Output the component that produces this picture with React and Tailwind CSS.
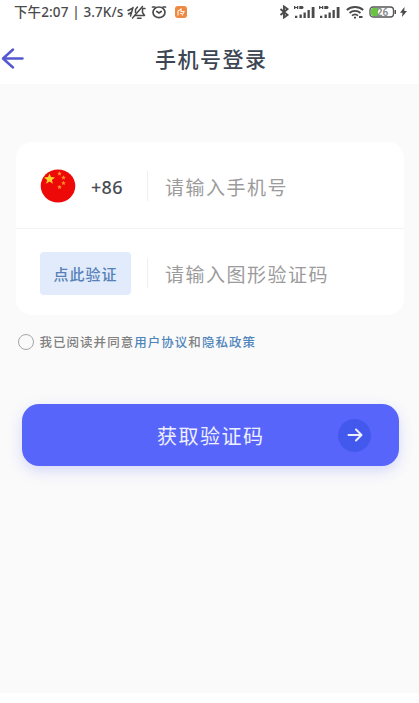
import React from 'react';

const LINKS = ['用户协议', '隐私政策'];

const SMALL_STARS = [
  { x: 19.5, y: 4.5 },
  { x: 23.5, y: 8.5 },
  { x: 23.5, y: 14 },
  { x: 19.5, y: 18 },
];

function MuteIcon() {
  return (
    <svg width="20" height="16" viewBox="0 0 20 16" fill="none" stroke="#4a4a4a" strokeWidth="1.500" strokeLinecap="round" strokeLinejoin="round">
      <path d="M1 6.500 5 4.500M1.500 10l3-1.800M6 3.500 3.500 12" />
      <path d="M8 11.500h9.500L15.500 8.500V4.500h2.500M8.500 8.500V5.500l2-2.500" />
      <path d="M15.500 2.500 5.500 14M10.500 14.300h3.500" />
    </svg>
  );
}

function AlarmIcon() {
  return (
    <svg width="16" height="16" viewBox="0 0 16 16" fill="none" stroke="#4a4a4a" strokeWidth="1.700" strokeLinecap="round">
      <ellipse cx="8" cy="8.300" rx="6" ry="5.300" />
      <path d="M1.500 3H4M14.500 3H12M5.800 7.500 8 9l2.200-1.500" />
    </svg>
  );
}

function AppBadge() {
  return (
    <svg width="12" height="12" viewBox="0 0 12 12" fill="none">
      <rect width="12" height="12" rx="3" fill="#ee8944" />
      <path d="M3 9.500V5l3-2v2.500h3L7 9.500M5 7.500h2" stroke="#fff1e4" strokeWidth="1.200" />
    </svg>
  );
}

function BluetoothIcon() {
  return (
    <svg width="11" height="14" viewBox="0 0 11 14" fill="none" stroke="#4a4a4a" strokeWidth="1.900">
      <path d="m1.500 4 7 6L5 12.500v-11L8.500 4l-7 6" />
    </svg>
  );
}

function SignalIcon() {
  return (
    <svg width="22" height="14" viewBox="0 0 22 14" fill="#4a4a4a">
      <path d="M0 1h1.300v1H3V1h1.300v3H3V3H1.300v1H0zM5.300 1H8.500L9.500 2v1L8.500 4H5.300z" />
      <path d="M1 10.800h2.300V13H1zM5.500 9.500h2.300V13H5.500zM9.500 7.500h2.300V13H9.500zM13.500 5h2.300v8h-2.300zM17.700 2h2.800v11h-2.800z" />
    </svg>
  );
}

function WifiIcon() {
  return (
    <svg width="18" height="14" viewBox="0 0 18 14" fill="none" stroke="#4a4a4a" strokeWidth="1.800">
      <path d="M.8 5c4.500-4 11.900-4 16.400 0M3.500 8c3.200-2.800 7.800-2.800 11 0M6 10.700c1.700-1.500 4.300-1.500 6 0" />
      <path d="M8 12.700h2M13 12h3.500" />
    </svg>
  );
}

function BatteryIcon() {
  return (
    <svg width="28" height="14" viewBox="0 0 28 14">
      <rect x="1" y="2" width="23.500" height="10" rx="3" fill="#fff" stroke="#555" strokeWidth="1.300" />
      <path d="M4 3h5v8H4c-1.300 0-2-.8-2-2V5c0-1.200.7-2 2-2z" fill="#69c53f" />
      <path d="M25.500 5h1.500v4h-1.500z" fill="#555" />
      <text x="13.500" y="10.500" textAnchor="middle" fontSize="10" fontWeight="600" fill="#888" fontFamily="Roboto, sans-serif">26</text>
    </svg>
  );
}

function Flag() {
  return (
    <svg width="36" height="34" viewBox="0 0 36 34">
      <ellipse cx="18" cy="17" rx="17.300" ry="16.500" fill="#ed0908" />
      <path
        d="m9.500 4.500 1.500 3.600 4 .3-3.100 2.500 1 3.800-3.400-2.100-3.400 2.100 1-3.800L4 8.400l4-.3z"
        fill="#ffd32b"
      />
      {SMALL_STARS.map(({ x, y }) => (
        <path key={`${x}-${y}`} transform={`translate(${x} ${y})`} d="m0-2.300.7 1.500 1.600.1-1.200 1.100.4 1.600L0 1.200l-1.500.8.400-1.600-1.200-1.100 1.600-.1z" fill="#ff8d2b" />
      ))}
    </svg>
  );
}

function StatusBar() {
  return (
    <div className="flex h-[22px] items-center pt-[2px] pl-3.5 text-[#4a4a4a]">
      <span className="w-[113px] text-[13.500px] leading-[20px] font-medium tracking-[0.120px] whitespace-nowrap">
        下午2:07 | 3.7K/s
      </span>
      <div className="flex items-center">
        <MuteIcon />
        <span className="ml-1"><AlarmIcon /></span>
        <span className="ml-2"><AppBadge /></span>
      </div>
      <div className="mr-3 ml-auto flex items-center">
        <BluetoothIcon />
        <span className="ml-1"><SignalIcon /></span>
        <span className="ml-[3px]"><SignalIcon /></span>
        <span className="ml-[5px]"><WifiIcon /></span>
        <span className="ml-[5px]"><BatteryIcon /></span>
        <svg className="ml-[3px]" width="7" height="12" viewBox="0 0 7 12" fill="#4a4a4a">
          <path d="M4.500 1 0 6.700h2.500L2 11l5-6H4.300z" />
        </svg>
      </div>
    </div>
  );
}

function Header() {
  return (
    <header className="flex h-[62px] items-center bg-white pt-[11px]">
      <button aria-label="返回" className="w-[155px]">
        <svg width="25" height="24" viewBox="0 0 25 24" fill="none" stroke="#5559d0" strokeWidth="2.500" strokeLinecap="round" strokeLinejoin="round">
          <path d="M22.500 11.500H3M13 2.500 3 11.500l10 9" />
        </svg>
      </button>
      <h1 className="pt-[3px] text-[21px] font-medium tracking-[1.500px] whitespace-nowrap text-[#3c4653]">手机号登录</h1>
    </header>
  );
}

function Field({ prefix, placeholder }) {
  return (
    <div className="flex h-[86px] items-center pt-[2px] pl-6">
      <div className="flex w-[107px] items-center">{prefix}</div>
      <div className="h-[30px] w-px bg-[#efefef]" />
      <input
        className="ml-[17px] w-[220px] pt-1 text-[19px] tracking-[1.500px] outline-none placeholder:text-[#9b9b9b]"
        placeholder={placeholder}
      />
    </div>
  );
}

export default function App() {
  return (
    <div className="flex h-[703px] w-[419px] flex-col overflow-hidden bg-white font-['Noto_Sans','Noto_Sans_CJK_SC',sans-serif]">
      <StatusBar />
      <Header />

      <main className="h-[609px] bg-[#fafafa] pt-[58px]">
        <section className="mx-4 h-[173px] w-[388px] rounded-[16px] bg-white">
          <Field
            placeholder="请输入手机号"
            prefix={
              <>
                <Flag />
                <span className="ml-[15px] pt-0.5 text-[18px] font-medium tracking-[0.300px] text-[#484d54]">+86</span>
              </>
            }
          />
          <div className="h-px bg-[#f4f4f4]" />
          <Field
            placeholder="请输入图形验证码"
            prefix={
              <button className="h-[43px] w-[91px] rounded bg-[#e1ebfc] pt-0.5 text-[15px] font-medium tracking-[1px] text-[#5580b8]">
                点此验证
              </button>
            }
          />
        </section>

        {/* Agreement */}
        <label className="mt-[17px] ml-[18px] flex h-5 items-center text-[12.500px] font-medium tracking-[1.030px] text-[#808080]">
          <span className="mr-[6px] size-[15.500px] rounded-full border border-[#a5a5a5]" />
          <span className="pt-0.5">
            我已阅读并同意
            <span className="text-[#4f84ba]">{LINKS[0]}</span>
            和
            <span className="text-[#4f84ba]">{LINKS[1]}</span>
          </span>
        </label>

        <button className="mt-[52px] ml-[22px] flex h-[62px] w-[377px] items-center rounded-[17px] bg-[#5865fb] pl-[135px] text-white shadow-[0_5px_14px_rgba(88,101,251,0.22)]">
          <span className="w-[181px] pt-[4px] text-left text-[20px] tracking-[1.500px] text-[#eef0ff]">获取验证码</span>
          <span className="flex size-[33px] items-center justify-center rounded-full bg-[#4359ed]">
            <svg width="16" height="16" viewBox="0 0 16 16" fill="none" stroke="#eef0ff" strokeWidth="2" strokeLinecap="round" strokeLinejoin="round">
              <path d="M1.500 8h13M9 2.500 14.500 8 9 13.500" />
            </svg>
          </span>
        </button>
      </main>
    </div>
  );
}
